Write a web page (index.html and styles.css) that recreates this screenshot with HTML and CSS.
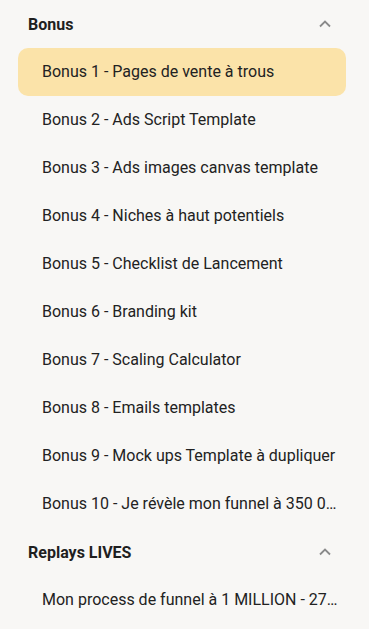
FILE: index.html
```html
<!DOCTYPE html>
<html lang="fr">
<head>
    <meta charset="UTF-8">
    <meta name="viewport" content="width=device-width, initial-scale=1.0">
    <title>Modules</title>
    <link rel="stylesheet" href="styles.css">
</head>
<body>
    <div class="sidebar">
        <div class="section">
            <div class="section-header">
                <span class="section-title">Bonus</span>
                <svg class="chevron" width="14" height="14" viewBox="0 0 14 14"><path d="M2 9.5 L7 4.5 L12 9.5" fill="none" stroke="#8a8a8a" stroke-width="1.8"/></svg>
            </div>
            <div class="item active">Bonus 1 - Pages de vente à trous</div>
            <div class="item">Bonus 2 - Ads Script Template</div>
            <div class="item">Bonus 3 - Ads images canvas template</div>
            <div class="item">Bonus 4 - Niches à haut potentiels</div>
            <div class="item">Bonus 5 - Checklist de Lancement</div>
            <div class="item">Bonus 6 - Branding kit</div>
            <div class="item">Bonus 7 - Scaling Calculator</div>
            <div class="item">Bonus 8 - Emails templates</div>
            <div class="item">Bonus 9 - Mock ups Template à dupliquer</div>
            <div class="item">Bonus 10 - Je révèle mon funnel à 350 0…</div>
        </div>
        <div class="section">
            <div class="section-header">
                <span class="section-title">Replays LIVES</span>
                <svg class="chevron" width="14" height="14" viewBox="0 0 14 14"><path d="M2 9.5 L7 4.5 L12 9.5" fill="none" stroke="#8a8a8a" stroke-width="1.8"/></svg>
            </div>
            <div class="item">Mon process de funnel à 1 MILLION - 27…</div>
        </div>
    </div>
</body>
</html>
```

FILE: styles.css
```css
body {
    font-family: Roboto, "Noto Sans", Arial, sans-serif;
    background: #f8f7f5;
    margin: 0;
    color: #222222;
}
.sidebar {
    padding: 0 23px 0 18px;
}
.section-header {
    height: 48px;
    display: flex;
    align-items: center;
    justify-content: space-between;
    padding: 0 14px 0 10px;
}
.section-title {
    font-size: 16px;
    font-weight: bold;
    color: #1f1f1f;
}
.chevron {
    display: block;
}
.item {
    height: 48px;
    line-height: 48px;
    padding: 0 4px 0 24px;
    font-size: 16px;
    white-space: nowrap;
    overflow: hidden;
    border-radius: 10px;
}
.item.active {
    background: #fbe3a9;
}
```
